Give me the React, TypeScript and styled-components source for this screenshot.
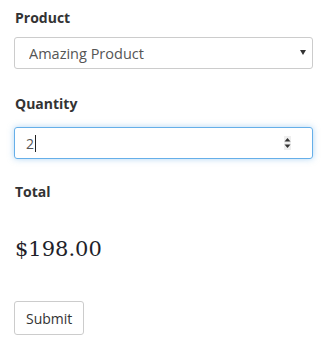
import React from "react";
import styled, { createGlobalStyle } from "styled-components";

const Global = createGlobalStyle`
  html, body { margin: 0; padding: 0; background: #fff; }
  body { font-family: "Open Sans", "Liberation Sans", sans-serif; color: #333; }
`;

const Form = styled.form`
  display: flex;
  flex-direction: column;
  padding: 8px 12px 0 14px;
  width: 299px;
`;

const Field = styled.div<{ $gap?: number }>`
  display: flex;
  flex-direction: column;
  margin-bottom: ${(p) => p.$gap ?? 24}px;
`;

const Label = styled.label<{ $gap?: number }>`
  font-size: 14px;
  font-weight: 700;
  line-height: 20px;
  color: #333;
  margin: 0 0 ${(p) => p.$gap ?? 9}px 1px;
`;

const SelectWrap = styled.div`
  position: relative;
  height: 32px;
`;

const Select = styled.select`
  appearance: none;
  -webkit-appearance: none;
  width: 100%;
  height: 32px;
  box-sizing: border-box;
  border: 1px solid #ccc;
  border-radius: 3px;
  background: #fff;
  padding: 0 24px 0 14px;
  font-family: "Open Sans", "Liberation Sans", sans-serif;
  font-size: 14.5px;
  color: #555;
  outline: none;
`;

const Arrow = styled.span`
  position: absolute;
  right: 7px;
  top: 13px;
  width: 0;
  height: 0;
  border-left: 3px solid transparent;
  border-right: 3px solid transparent;
  border-top: 5px solid #333;
  pointer-events: none;
`;

const InputBox = styled.div`
  display: flex;
  align-items: center;
  height: 32px;
  box-sizing: border-box;
  border: 1px solid #66afe9;
  border-radius: 3px;
  box-shadow: 0 0 6px rgba(102, 175, 233, 0.5);
  padding: 0 21px 0 11px;
  font-size: 14px;
  color: #555;
`;

const Caret = styled.span`
  display: inline-block;
  width: 1px;
  height: 17px;
  background: #222;
  margin-left: 1px;
`;

const Spacer = styled.span`
  flex: 1;
`;

const Spinner = styled.svg`
  display: block;
`;

const Total = styled.div`
  font-family: "DejaVu Serif", "Liberation Serif", serif;
  font-size: 21px;
  line-height: 28px;
  color: #1f1f2a;
  margin: 33px 0 0 1px;
`;

const Button = styled.button`
  align-self: flex-start;
  margin-top: 38px;
  height: 34px;
  padding: 0 11px;
  border: 1px solid #ccc;
  border-radius: 3px;
  background: #fff;
  font-family: "Open Sans", "Liberation Sans", sans-serif;
  font-size: 14px;
  color: #333;
`;

export default function App() {
  return (
    <>
      <Global />
      <Form onSubmit={(e) => e.preventDefault()}>
        <Field $gap={25}>
          <Label>Product</Label>
          <SelectWrap>
            <Select defaultValue="amazing">
              <option value="amazing">Amazing Product</option>
            </Select>
            <Arrow />
          </SelectWrap>
        </Field>
        <Field $gap={23}>
          <Label $gap={13}>Quantity</Label>
          <InputBox>
            <span>2</span>
            <Caret />
            <Spacer />
            <Spinner width="7" height="14" viewBox="0 0 7 14">
              <rect x="0" y="0" width="7" height="14" fill="#eeeeee" />
              <path d="M0.5 5.5 L3.5 2 L6.5 5.5 Z" fill="#333" />
              <path d="M0.5 8.5 L3.5 12 L6.5 8.5 Z" fill="#333" />
            </Spinner>
          </InputBox>
        </Field>
        <Field $gap={0}>
          <Label $gap={0}>Total</Label>
          <Total>$198.00</Total>
        </Field>
        <Button type="submit">Submit</Button>
      </Form>
    </>
  );
}
